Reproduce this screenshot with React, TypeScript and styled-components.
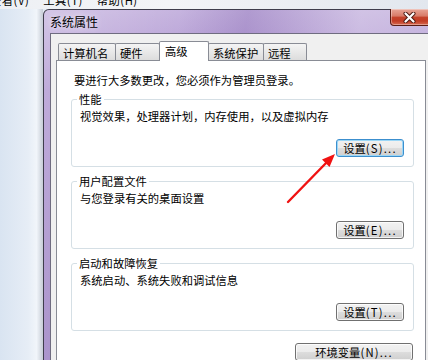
import { createGlobalStyle, styled } from "styled-components";

const GlobalStyle = createGlobalStyle`
  * { box-sizing: border-box; }
  html, body { margin: 0; padding: 0; background: #e4ebf4; }
  body {
    font-family: "Noto Sans CJK SC", "Liberation Sans", sans-serif;
    font-size: 11.3px;
    color: #000;
  }
`;

const menus = ["查看(V)", "工具(T)", "帮助(H)"];

const tabs = [
  { label: "计算机名", width: 58 },
  { label: "硬件", width: 45 },
  { label: "高级", width: 50, active: true },
  { label: "系统保护", width: 56 },
  { label: "远程", width: 44 },
];

const groups = [
  { title: "性能", text: "视觉效果，处理器计划，内存使用，以及虚拟内存", hotkey: "S", focused: true },
  { title: "用户配置文件", text: "与您登录有关的桌面设置", hotkey: "E" },
  { title: "启动和故障恢复", text: "系统启动、系统失败和调试信息", hotkey: "T" },
];

const App = () => {
  return (
    <>
      <GlobalStyle />
      <Desktop>
        <MenuStrip>
          {menus.map((m) => (
            <MenuItem key={m}>{m}</MenuItem>
          ))}
        </MenuStrip>
        <Main>
          <Backdrop />
          <Window>
            <TitleBar>
              <Title>系统属性</Title>
              <CloseButton>
                <svg width="13" height="11" viewBox="0 0 13 11">
                  <path d="M2.5 1.5 L10.5 9.5 M10.5 1.5 L2.5 9.5" stroke="#4a1710" strokeWidth="4" strokeLinecap="round" />
                  <path d="M2.5 1.5 L10.5 9.5 M10.5 1.5 L2.5 9.5" stroke="#fff" strokeWidth="2.2" strokeLinecap="round" />
                </svg>
              </CloseButton>
            </TitleBar>
            <Client>
              <TabStrip>
                {tabs.map((t) => (
                  <Tab key={t.label} $width={t.width} $active={t.active}>
                    {t.label}
                  </Tab>
                ))}
              </TabStrip>
              <Panel>
                <Intro>要进行大多数更改，您必须作为管理员登录。</Intro>
                {groups.map((g) => (
                  <Group key={g.title}>
                    <Legend>{g.title}</Legend>
                    <GroupText>{g.text}</GroupText>
                    <ButtonRow>
                      <Button $width={68} $focused={g.focused}>
                        设置<Hotkey>({g.hotkey})...</Hotkey>
                      </Button>
                    </ButtonRow>
                  </Group>
                ))}
                <EnvRow>
                  <Button $width={118}>
                    环境变量<Hotkey>(N)...</Hotkey>
                  </Button>
                </EnvRow>
              </Panel>
            </Client>
          </Window>
        </Main>
        <Annotation width="428" height="360" viewBox="0 0 428 360">
          <line x1="288" y1="202" x2="328" y2="161" stroke="#f01212" strokeWidth="2.4" strokeLinecap="round" />
          <polygon points="335,154 322,159.5 329.5,167" fill="#f01212" />
        </Annotation>
      </Desktop>
    </>
  );
};

export default App;

const Desktop = styled.div`
  position: relative;
  width: 428px;
  height: 360px;
  overflow: hidden;
  display: flex;
  flex-direction: column;
`;

const MenuStrip = styled.div`
  height: 9px;
  flex-shrink: 0;
  overflow: hidden;
  display: flex;
  gap: 14px;
  background: linear-gradient(90deg, #eef0f4 0%, #f3f4f7 40%, #e2e7ee 100%);
`;

const MenuItem = styled.span`
  margin-top: -7px;
  line-height: 14px;
  letter-spacing: 0.5px;
  white-space: nowrap;
  &:first-child {
    margin-left: -10px;
  }
`;

const Main = styled.div`
  flex: 1;
  display: flex;
  min-height: 0;
`;

const Backdrop = styled.div`
  width: 43px;
  flex-shrink: 0;
  background: linear-gradient(90deg, #d9e4f1 0%, #e6edf6 65%, #f1f5fa 85%, #c6ccd6 100%);
`;

const Window = styled.div`
  width: 395px;
  flex-shrink: 0;
  display: flex;
  flex-direction: column;
  padding: 0 6px;
  border: 1px solid #3f3d4c;
  border-bottom: none;
  border-radius: 6px 6px 0 0;
  background: linear-gradient(100deg, rgba(255, 255, 255, 0.25) 0%, rgba(255, 255, 255, 0) 30%, rgba(80, 40, 140, 0.18) 45%, rgba(255, 255, 255, 0.2) 70%, rgba(255, 255, 255, 0.05) 100%),
    linear-gradient(#c6b4df, #ad93cf 80px, #9e84c4);
`;

const TitleBar = styled.div`
  height: 23px;
  flex-shrink: 0;
  display: flex;
  justify-content: space-between;
  align-items: flex-start;
`;

const Title = styled.span`
  margin-top: 5px;
  font-size: 12px;
  line-height: 14px;
  text-shadow: 0 0 6px rgba(255, 255, 255, 0.9);
`;

const CloseButton = styled.div`
  width: 41px;
  height: 17px;
  margin-top: -1px;
  display: flex;
  align-items: center;
  justify-content: center;
  padding-right: 2px;
  border: 1px solid #5a1c14;
  border-top: none;
  border-radius: 0 0 4px 4px;
  background: linear-gradient(#e8a597 0%, #d87a67 45%, #c5432c 50%, #c23c25 75%, #d76a52 100%);
  box-shadow: inset 0 0 0 1px rgba(255, 255, 255, 0.35);
`;

const Client = styled.div`
  flex: 1;
  display: flex;
  flex-direction: column;
  padding: 0 4px 0 5px;
  background: #f0f0f0;
  border: 1px solid #6f6c80;
  border-bottom: none;
`;

const TabStrip = styled.div`
  height: 26px;
  flex-shrink: 0;
  display: flex;
  align-items: flex-end;
  padding-left: 2px;
`;

const Tab = styled.div<{ $width: number; $active?: boolean }>`
  position: relative;
  z-index: ${({ $active }) => ($active ? 1 : 0)};
  width: ${({ $width }) => $width}px;
  height: ${({ $active }) => ($active ? 20 : 17)}px;
  margin-left: -1px;
  margin-bottom: ${({ $active }) => ($active ? -1 : 0)}px;
  padding: 2px 0 0 ${({ $active }) => ($active ? 5 : 4)}px;
  border: 1px solid #898c95;
  border-bottom: none;
  border-radius: 2px 2px 0 0;
  background: ${({ $active }) => ($active ? "#fff" : "linear-gradient(#f4f4f4, #e8e8e8 50%, #dcdcdc)")};
  line-height: 14px;
  white-space: nowrap;
  &:first-child {
    margin-left: 0;
  }
`;

const Panel = styled.div`
  flex: 1;
  display: flex;
  flex-direction: column;
  padding: 12px 11px 0 14px;
  background: #fff;
  border: 1px solid #898c95;
  border-bottom: none;
`;

const Intro = styled.div`
  padding-left: 3px;
  line-height: 14px;
  white-space: nowrap;
`;

const Group = styled.fieldset`
  margin: 7px 0 0;
  padding: 3px 9px 9px 8px;
  min-inline-size: 0;
  border: 1px solid #d5dfe5;
  border-radius: 3px;
  &:first-of-type {
    margin-top: 5px;
  }
`;

const Legend = styled.legend`
  margin-left: -3px;
  padding: 0 2px;
  line-height: 14px;
`;

const GroupText = styled.div`
  line-height: 14px;
  white-space: nowrap;
`;

const ButtonRow = styled.div`
  display: flex;
  justify-content: flex-end;
  margin-top: 16px;
`;

const EnvRow = styled.div`
  display: flex;
  justify-content: flex-end;
  margin-top: 12px;
  padding-right: 1px;
`;

const Button = styled.button<{ $width: number; $focused?: boolean }>`
  width: ${({ $width }) => $width}px;
  height: 18px;
  flex-shrink: 0;
  padding: 0;
  font: inherit;
  line-height: 16px;
  color: #000;
  white-space: nowrap;
  border: 1px solid ${({ $focused }) => ($focused ? "#3c8fce" : "#707070")};
  border-radius: 3px;
  background: linear-gradient(#f2f2f2 0%, #ebebeb 50%, #dddddd 50%, #cfcfcf 100%);
  box-shadow: inset 0 0 0 1px ${({ $focused }) => ($focused ? "#9bd7f7" : "rgba(255, 255, 255, 0.75)")};
`;

const Hotkey = styled.span`
  letter-spacing: 1.2px;
`;

const Annotation = styled.svg`
  position: absolute;
  left: 0;
  top: 0;
  pointer-events: none;
`;
